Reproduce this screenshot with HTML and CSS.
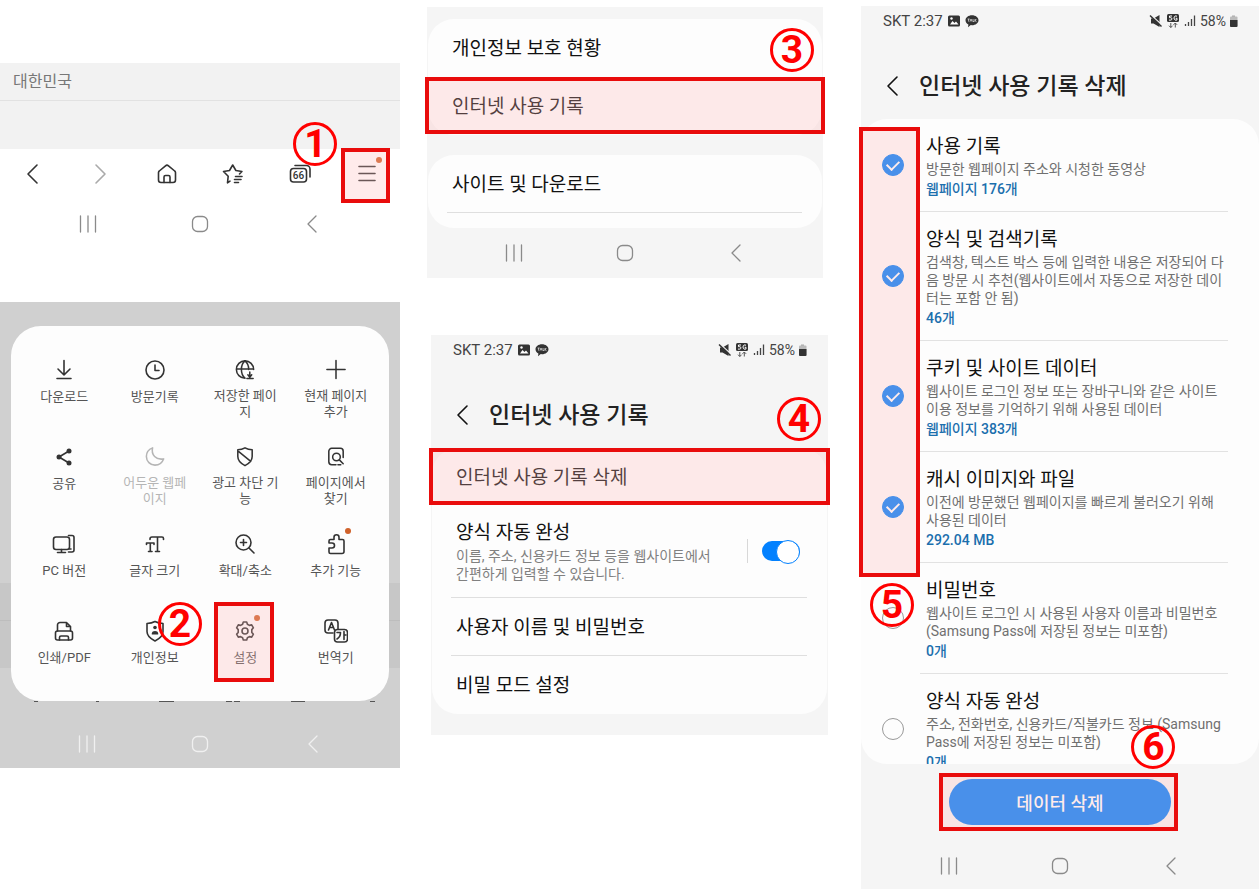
FILE: index.html
```html
<!DOCTYPE html>
<html lang="ko">
<head>
<meta charset="utf-8">
<title>인터넷 사용 기록 삭제 방법</title>
<link rel="stylesheet" href="styles.css">
</head>
<body>
<svg class="defs" aria-hidden="true">
  <symbol id="recents" viewBox="0 0 24 24"><path d="M4.500 4v16M12 4v16M19.500 4v16"/></symbol>
  <symbol id="homekey" viewBox="0 0 24 24"><rect x="4.500" y="4.500" width="15" height="15" rx="5"/></symbol>
  <symbol id="backkey" viewBox="0 0 24 24"><path d="M16 4 8 12l8 8"/></symbol>
  <symbol id="chevron" viewBox="0 0 24 24"><path d="M16 3 7 12l9 9"/></symbol>
  <symbol id="photo" viewBox="0 0 14 14"><rect x="1" y="1.500" width="12" height="11" rx="1.500" fill="#333"/><path d="M3 10.500 5.500 7l2 2 1.500-1.500 2.500 3z" fill="#fff"/><circle cx="4.500" cy="4.500" r="1.200" fill="#fff"/></symbol>
  <symbol id="talk" viewBox="0 0 14 14"><path d="M7 1.200c3.600 0 6.500 2.200 6.500 5s-2.900 5-6.500 5l-1.200-.1L3 13.300l.4-2.900C1.600 9.500.5 8 .5 6.200c0-2.800 2.900-5 6.500-5z" fill="#333"/><path d="M2.600 5h2M3.600 5v2.600M5 7.600 6 5l1 2.600M8 5v2.500h1.300M10 5v2.600M11.400 5 10 6.400l1.500 1.200" fill="none" stroke="#eee" stroke-width=".7"/></symbol>
  <symbol id="mute" viewBox="0 0 14 14"><path d="M2 4.500h2.500L10.500 1v12L4.500 9.500H2z" fill="#333"/><path d="M2.500 1.500 13 11" stroke="#f5f5f5" stroke-width="1.200"/><path d="m1 1.500 11.500 11" stroke="#333" stroke-width="1.500"/></symbol>
  <symbol id="fiveg" viewBox="0 0 14 14"><rect x="1" y="0" width="12" height="8" rx="1.500" fill="#333"/><path d="M6 2H3.500v1.700h1.300c1.500 0 1.500 2.400 0 2.400H3M11 2.300C9.500 1.300 8 2.300 8 4s1.500 2.900 3 1.900V4.300H9.700" fill="none" stroke="#fff"/><path d="M4.800 9v4.500M3 11.700l1.800 1.800 1.800-1.800M9.300 13.500V9M7.500 10.800 9.300 9l1.800 1.800" fill="none" stroke="#555"/></symbol>
  <symbol id="signal" viewBox="0 0 14 14"><path d="M2.500 10v2M5.500 8v4M8.500 5v7" stroke="#444" stroke-width="1.300"/><path d="M11.500 1.500V12" stroke="#444" stroke-width="1.300"/></symbol>
  <symbol id="battery" viewBox="0 0 9 14"><path d="M3 1.500h3V3H3z" fill="#aaa"/><rect x="1" y="2.500" width="7.500" height="10.500" rx="1" fill="#bbb"/><path d="M1 6h7.500v6a1 1 0 0 1-1 1H2a1 1 0 0 1-1-1z" fill="#333"/></symbol>
</svg>

<main class="page">
  <div class="column column-menu">
    <section class="browser" aria-label="브라우저 하단 메뉴">
      <p class="region">대한민국</p>
      <div class="blank"></div>
      <div class="toolbar">
        <button class="tool" aria-label="뒤로"><svg class="icon"><use href="#chevron"/></svg></button>
        <button class="tool tool-off" aria-label="앞으로"><svg class="icon" viewBox="0 0 24 24"><path d="m8 3 9 9-9 9"/></svg></button>
        <button class="tool" aria-label="홈"><svg class="icon" viewBox="0 0 24 24"><path d="M3.500 10.500a2 2 0 0 1 .8-1.500l6.200-5.200a2.300 2.300 0 0 1 3 0L19.700 9a2 2 0 0 1 .8 1.500V18a2.500 2.500 0 0 1-2.500 2.500H6A2.500 2.500 0 0 1 3.500 18z"/><path d="M9 20.500V15a1.500 1.500 0 0 1 1.500-1.500h3A1.500 1.500 0 0 1 15 15v5.500"/></svg></button>
        <button class="tool" aria-label="북마크"><svg class="icon" viewBox="0 0 24 24"><path d="M9 19.200 6.500 20.800l.7-6.600-4.700-4.700 6-1L11.700 3l3.200 5.500 6 1-2.400 2.500M14.500 14.500H21M13.500 17.500h6.500M13.500 20.500h4"/></svg></button>
        <button class="tool" aria-label="탭"><svg class="icon" viewBox="0 0 24 24"><rect x="2.500" y="6.500" width="16" height="13.500" rx="3"/><path d="M7 3.500h11.500A3.500 3.500 0 0 1 22 7v8"/><text x="10.500" y="17" text-anchor="middle" class="tab-count">66</text></svg></button>
        <button class="tool" aria-label="메뉴"><svg class="icon" viewBox="0 0 24 24"><path d="M4 4.500h16M4 11.500h16M4 18.500h16"/></svg><span class="dot"></span><span class="mark mark-menu"></span><span class="step step-1">1</span></button>
      </div>
      <nav class="keys keys-tall"><svg class="icon"><use href="#recents"/></svg><svg class="icon"><use href="#homekey"/></svg><svg class="icon"><use href="#backkey"/></svg></nav>
    </section>

    <section class="sheet" aria-label="메뉴">
      <div class="menu">
        <button class="item"><svg class="icon" viewBox="0 0 24 24"><path d="M12 2.500V17M6 11l6 6 6-6M5 20.500h14"/></svg><span>다운로드</span></button>
        <button class="item"><svg class="icon" viewBox="0 0 24 24"><circle cx="12" cy="12" r="9"/><path d="M12 7v5.500h4"/></svg><span>방문기록</span></button>
        <button class="item"><svg class="icon" viewBox="0 0 24 24"><path d="M12 21a9 9 0 1 1 9-9M12 21c-5-4-5-14 0-18M12 3c2.800 2.400 4 5.500 3.800 9M3.500 11.500H21M17 14.500v5.500M15 17.500l2 2.500 2-2.500M14 21.500h6.500"/></svg><span>저장한 페이지</span></button>
        <button class="item"><svg class="icon" viewBox="0 0 24 24"><path d="M12 2.500v19M2.500 12h19"/></svg><span>현재 페이지 추가</span></button>
        <button class="item"><svg class="icon" viewBox="0 0 24 24"><path d="M17 6 7 12l10 6"/><g class="solid"><circle cx="17" cy="6" r="2.500"/><circle cx="7" cy="12" r="2.500"/><circle cx="17" cy="18" r="2.500"/></g></svg><span>공유</span></button>
        <button class="item item-off"><svg class="icon" viewBox="0 0 24 24"><path d="M9.500 3c-1.800 7 3.500 13 11.500 11.500C19.500 18.500 16 21 12 21a9 9 0 0 1-9-9c0-4 2.500-7.500 6.500-9z"/></svg><span>어두운 웹페이지</span></button>
        <button class="item"><svg class="icon" viewBox="0 0 24 24"><path d="M12 3c2.500 1.500 5 2 7.500 2v7c0 4.500-3.500 7.500-7.500 9.500C8 19.500 4.500 16.500 4.500 12V5C7 5 9.500 4.500 12 3zM5.500 7 18 17"/></svg><span>광고 차단 기능</span></button>
        <button class="item"><svg class="icon" viewBox="0 0 24 24"><path d="M12 20.500H7.500a3 3 0 0 1-3-3v-11a3 3 0 0 1 3-3h9a3 3 0 0 1 3 3V13"/><circle cx="12.500" cy="12.500" r="4"/><path d="m15.500 15.500 4 4M14 20.500h3"/></svg><span>페이지에서 찾기</span></button>
        <button class="item"><svg class="icon" viewBox="0 0 24 24"><rect x="1.500" y="5" width="16" height="12.500" rx="2.500"/><path d="M16.500 3.500H20a2 2 0 0 1 2 2V18a2 2 0 0 1-2 2h-3.500M9.500 17.500v3M5.500 20.500h8M17.500 17h1.500"/></svg><span>PC 버전</span></button>
        <button class="item"><svg class="icon" viewBox="0 0 24 24"><path d="M7 7.500V7a2 2 0 0 1 2-2h10a1.500 1.500 0 0 1 1.500 1.500v1M14.500 5v14.500M12.500 19.500h4M3.500 12.500v-1.500H11v1.500M7.300 11v8.500M5.500 19.500h3.500"/></svg><span>글자 크기</span></button>
        <button class="item"><svg class="icon" viewBox="0 0 24 24"><circle cx="10.500" cy="10.500" r="7.500"/><path d="m16 16 5 5M10.500 7.500v6M7.500 10.500h6"/></svg><span>확대/축소</span></button>
        <button class="item"><svg class="icon" viewBox="0 0 24 24"><path d="M5 11V9a1.500 1.500 0 0 1 1.500-1.500H10V5.300a2.500 2.500 0 1 1 5 0v2.200h3.500A1.500 1.500 0 0 1 20 9v10.500a2 2 0 0 1-2 2H6.500A1.500 1.500 0 0 1 5 20v-4h3a2.500 2.500 0 1 0 0-5H5z"/></svg><span>추가 기능</span><span class="dot"></span></button>
        <button class="item"><svg class="icon" viewBox="0 0 24 24"><path d="M5.500 12V6A2.500 2.500 0 0 1 8 3.500h6.500l4 4V12M14.500 3.500v4h4"/><rect x="3.500" y="12" width="17" height="9" rx="2"/><path d="M7.500 21v-2.500c0-1 .5-1.500 1.500-1.500h6c1 0 1.500.5 1.500 1.500V21"/></svg><span>인쇄/PDF</span></button>
        <button class="item"><svg class="icon" viewBox="0 0 24 24"><path d="M12 2.500c2.500 1.300 5 1.800 8 2v8c0 4.500-4 7.500-8 9.500-4-2-8-5-8-9.500v-8c3-.2 5.500-.7 8-2z"/><g class="solid"><circle cx="12" cy="8.500" r="1.800"/><path d="M8.800 15.500v-1c0-3.300 6.400-3.300 6.400 0v1z"/></g></svg><span>개인정보</span></button>
        <button class="item"><svg class="icon" viewBox="0 0 24 24"><path d="M9.600 5.200 10.300 3h3.400l.7 2.200 2 1.200 2.300-.5 1.700 2.900-1.600 1.800v2.800l1.600 1.800-1.700 2.900-2.300-.5-2 1.200-.7 2.200h-3.400l-.7-2.200-2-1.200-2.300.5-1.700-2.900 1.600-1.800v-2.800L3.600 8.800l1.700-2.900 2.300.5z"/><circle cx="12" cy="12" r="3"/></svg><span>설정</span><span class="dot"></span><span class="mark mark-settings"></span><span class="step step-2">2</span></button>
        <button class="item"><svg class="icon" viewBox="0 0 24 24"><path d="M9 14H4a3 3 0 0 1-3-3V4a3 3 0 0 1 3-3h7a3 3 0 0 1 3 3v6"/><path d="m4.500 11 3-7.500 3 7.500M5.500 8.500h4"/><rect x="10.500" y="10.500" width="13" height="12.500" rx="3"/><path d="M13 13.500h3.500c0 3-1 5-3.500 6.500M20 12.500v8M20 16h2"/></svg><span>번역기</span></button>
      </div>
      <svg class="peek" viewBox="0 0 400 4" aria-hidden="true"><path d="M34 0h4M96 0h3M159 0h15M226 0h6M234 0h6M291 0h14M370 0h5"/></svg>
      <nav class="keys keys-light"><svg class="icon"><use href="#recents"/></svg><svg class="icon"><use href="#homekey"/></svg><svg class="icon"><use href="#backkey"/></svg></nav>
    </section>
  </div>

  <div class="column column-settings">
    <section class="panel panel-privacy" aria-label="개인정보">
      <ul class="card">
        <li class="row">개인정보 보호 현황</li>
        <li class="row">인터넷 사용 기록<span class="mark mark-row"></span><span class="step step-3">3</span></li>
      </ul>
      <ul class="card card-cut">
        <li class="row ruled">사이트 및 다운로드</li>
      </ul>
      <nav class="keys keys-tall"><svg class="icon"><use href="#recents"/></svg><svg class="icon"><use href="#homekey"/></svg><svg class="icon"><use href="#backkey"/></svg></nav>
    </section>

    <section class="panel panel-history" aria-label="인터넷 사용 기록">
      <div class="status"><span>SKT 2:37</span><svg class="glyph"><use href="#photo"/></svg><svg class="glyph"><use href="#talk"/></svg><span class="status-end"><svg class="glyph"><use href="#mute"/></svg><svg class="glyph"><use href="#fiveg"/></svg><svg class="glyph"><use href="#signal"/></svg><span>58%</span><svg class="cell"><use href="#battery"/></svg></span></div>
      <header class="title"><button class="back" aria-label="뒤로"><svg class="icon"><use href="#chevron"/></svg></button><h2>인터넷 사용 기록</h2></header>
      <ul class="card">
        <li class="row">인터넷 사용 기록 삭제<span class="mark mark-row"></span><span class="step step-4">4</span></li>
        <li class="row row-toggle ruled"><label for="autofill"><span class="name">양식 자동 완성</span><span class="note">이름, 주소, 신용카드 정보 등을 웹사이트에서<br>간편하게 입력할 수 있습니다.</span></label><span class="split"></span><input class="toggle" type="checkbox" id="autofill" checked></li>
        <li class="row ruled">사용자 이름 및 비밀번호</li>
        <li class="row">비밀 모드 설정</li>
      </ul>
    </section>
  </div>

  <div class="column column-delete">
    <section class="panel panel-delete" aria-label="인터넷 사용 기록 삭제">
      <div class="status"><span>SKT 2:37</span><svg class="glyph"><use href="#photo"/></svg><svg class="glyph"><use href="#talk"/></svg><span class="status-end"><svg class="glyph"><use href="#mute"/></svg><svg class="glyph"><use href="#fiveg"/></svg><svg class="glyph"><use href="#signal"/></svg><span>58%</span><svg class="cell"><use href="#battery"/></svg></span></div>
      <header class="title"><button class="back" aria-label="뒤로"><svg class="icon"><use href="#chevron"/></svg></button><h2>인터넷 사용 기록 삭제</h2></header>
      <div class="choices">
        <ul class="list">
          <li class="choice"><input type="checkbox" id="c1" checked><label for="c1"><span class="name">사용 기록</span><span class="note">방문한 웹페이지 주소와 시청한 동영상</span><span class="count">웹페이지 176개</span></label></li>
          <li class="choice"><input type="checkbox" id="c2" checked><label for="c2"><span class="name">양식 및 검색기록</span><span class="note">검색창, 텍스트 박스 등에 입력한 내용은 저장되어 다<br>음 방문 시 추천(웹사이트에서 자동으로 저장한 데이<br>터는 포함 안 됨)</span><span class="count">46개</span></label></li>
          <li class="choice"><input type="checkbox" id="c3" checked><label for="c3"><span class="name">쿠키 및 사이트 데이터</span><span class="note">웹사이트 로그인 정보 또는 장바구니와 같은 사이트<br>이용 정보를 기억하기 위해 사용된 데이터</span><span class="count">웹페이지 383개</span></label></li>
          <li class="choice"><input type="checkbox" id="c4" checked><label for="c4"><span class="name">캐시 이미지와 파일</span><span class="note">이전에 방문했던 웹페이지를 빠르게 불러오기 위해<br>사용된 데이터</span><span class="count">292.04 MB</span></label></li>
          <li class="choice"><input type="checkbox" id="c5"><label for="c5"><span class="name">비밀번호</span><span class="note">웹사이트 로그인 시 사용된 사용자 이름과 비밀번호<br>(Samsung Pass에 저장된 정보는 미포함)</span><span class="count">0개</span></label></li>
          <li class="choice"><input type="checkbox" id="c6"><label for="c6"><span class="name">양식 자동 완성</span><span class="note">주소, 전화번호, 신용카드/직불카드 정보 (Samsung<br>Pass에 저장된 정보는 미포함)</span><span class="count">0개</span></label></li>
        </ul>
        <span class="mark mark-checks"></span><span class="step step-5">5</span>
      </div>
      <div class="action"><button class="delete">데이터 삭제</button><span class="mark mark-delete"></span><span class="step step-6">6</span></div>
      <nav class="keys"><svg class="icon"><use href="#recents"/></svg><svg class="icon"><use href="#homekey"/></svg><svg class="icon"><use href="#backkey"/></svg></nav>
    </section>
  </div>
</main>
</body>
</html>
```
FILE: styles.css
```css
* { box-sizing: border-box; }

body {
  margin: 0;
  background: #fff;
  color: #111;
  font-family: Roboto, "Noto Sans CJK KR", sans-serif;
}

ul, p, h2 { margin: 0; padding: 0; list-style: none; }
button { padding: 0; border: 0; background: none; color: inherit; font: inherit; }
.defs { position: absolute; width: 0; height: 0; }

.icon {
  width: 24px;
  height: 24px;
  fill: none;
  stroke: currentColor;
  stroke-width: 1.6;
  stroke-linecap: round;
  stroke-linejoin: round;
}
.solid { fill: currentColor; stroke: none; }

.page {
  display: grid;
  grid-template-columns: 400fr 401fr 404fr;
  column-gap: 27px;
  height: 100vh;
}
.column { display: flex; flex-direction: column; min-width: 0; min-height: 0; }
.column-menu { padding-top: 63px; gap: 53px; }
.column-settings { padding-top: 7px; gap: 57px; }
.column-delete { padding: 6px 0 1px 6px; }

/* Annotations */
.mark {
  position: absolute;
  border: 4px solid #e90c0c;
  background: rgba(255, 183, 183, 0.28);
  pointer-events: none;
}
.step {
  position: absolute;
  z-index: 2;
  display: flex;
  align-items: center;
  justify-content: center;
  width: 44px;
  height: 44px;
  border: 3px solid #f00;
  border-radius: 50%;
  color: #f00;
  font: 700 39px/38px Roboto, sans-serif;
}
.mark-menu { inset: -1px 10px -4px 8px; }
.mark-settings { inset: -17px auto -1px 50%; width: 60px; margin-left: -31px; }
.mark-row { inset: 0 -3px 1px; }
.mark-checks { top: 8px; left: -2px; width: 61px; height: 450px; }
.mark-delete { inset: -6px -7px -6px -10px; }
.step-1 { top: -27px; left: -40px; }
.step-2 { top: -17px; left: -42px; }
.step-3 { top: -49px; right: 8px; }
.step-4 { top: -51px; right: 6px; }
.step-5 { top: 464px; left: 9px; }
.step-6 { top: -54px; right: -4px; }

/* System keys */
.keys {
  display: grid;
  grid-template-columns: repeat(3, 1fr);
  place-items: center;
  height: 46px;
  padding: 0 8%;
  color: #8a8a8a;
}
.keys .icon { stroke-width: 1.3; }
.keys-tall { height: 50px; }
.keys-light { height: 67px; margin: 0 -11px; padding-top: 19px; color: #f0f0f0; }

/* Browser */
.region {
  height: 38px;
  padding-left: 13px;
  border-bottom: 1px solid #e2e2e2;
  background: #f2f2f2;
  color: #777;
  font-size: 16px;
  line-height: 37px;
}
.blank { height: 48px; background: #f2f2f2; }
.toolbar { display: grid; grid-template-columns: repeat(6, 1fr); }
.tool { position: relative; display: grid; place-items: center; height: 50px; color: #333; }
.tool-off { color: #aaa; }
.tab-count { fill: currentColor; stroke: none; font: 500 10px Roboto, sans-serif; }
.dot {
  position: absolute;
  top: 8px;
  left: 50%;
  width: 6px;
  height: 6px;
  margin-left: 9px;
  border-radius: 50%;
  background: #d0622b;
}

/* Menu sheet */
.sheet {
  padding: 24px 11px 0;
  background: linear-gradient(#d0d0d0 281px, #c7c7c7 281px, #c7c7c7 318px, #bdbdbd 318px, #bdbdbd 319px, #c7c7c7 319px, #c7c7c7 366px, #d0d0d0 366px);
}
.menu {
  display: grid;
  grid-template-columns: repeat(4, 1fr);
  row-gap: 25px;
  padding: 32px 8px 20px;
  border-radius: 30px;
  background: #fdfdfd;
}
.item {
  position: relative;
  display: flex;
  flex-direction: column;
  align-items: center;
  gap: 7px;
  height: 62px;
  color: #333;
  font-size: 13px;
  line-height: 16px;
}
.item > span:first-of-type { max-width: 70px; color: #555; }
.item-off, .item-off > span:first-of-type { color: #b5b5b5; }
.item .dot { top: -4px; }
.peek { display: block; height: 4px; margin: 0 -11px -4px; fill: none; stroke: #555; stroke-width: 2; }

/* Settings panels */
.panel { background: #f5f5f5; }
.panel-privacy { margin-right: 5px; padding-top: 12px; }
.panel-history { margin-left: 4px; padding-bottom: 21px; }
.card { margin: 0 1px; border-radius: 26px; background: #fdfdfd; }
.card-cut { margin-top: 20px; padding-bottom: 15px; }
.row {
  position: relative;
  padding: 16px 24px 14px;
  font-size: 19px;
  line-height: 28px;
}
.ruled::after {
  content: "";
  position: absolute;
  right: 20px;
  bottom: 0;
  left: 19px;
  border-bottom: 1px solid #dfdfdf;
}
.name, .note, .count { display: block; }
.note { color: #808080; font-size: 14px; line-height: 18px; }
.row-toggle { display: flex; align-items: center; padding: 13px 27px 15px 24px; }
.row-toggle label { flex: 1; white-space: nowrap; }
.split { width: 1px; height: 24px; margin-right: 14px; background: #d8d8d8; }
.toggle {
  position: relative;
  width: 38px;
  height: 20px;
  margin: 0;
  border-radius: 10px;
  background: #0381fe;
  appearance: none;
}
.toggle::before {
  content: "";
  position: absolute;
  top: -1px;
  right: 0;
  width: 22px;
  height: 22px;
  border: 1px solid #0381fe;
  border-radius: 50%;
  background: #fff;
}

.status {
  display: flex;
  align-items: center;
  gap: 4px;
  height: 30px;
  padding: 0 21px 0 22px;
  color: #444;
  font-size: 15px;
}
.status-end { display: flex; align-items: center; gap: 3px; margin-left: auto; font-size: 14px; }
.glyph { width: 14px; height: 14px; }
.cell { width: 9px; height: 14px; }
.title { display: flex; align-items: center; gap: 14px; height: 83px; padding: 17px 20px 0; }
.title h2 { padding-top: 2px; color: #222; font-size: 23px; font-weight: 500; line-height: 32px; }
.back { height: 24px; }

/* Delete panel */
.panel-delete { display: flex; flex: 1; flex-direction: column; min-height: 0; }
.choices { position: relative; flex: 1; min-height: 0; }
.list { height: 100%; overflow: hidden; border-radius: 26px; background: #fdfdfd; }
.choice { display: grid; grid-template-columns: 64px 1fr; align-items: center; }
.choice::after { content: ""; grid-column: 1 / -1; height: 1px; margin: 0 31px 0 59px; background: #e2e2e2; }
.choice input {
  display: grid;
  place-items: center;
  width: 22px;
  height: 22px;
  margin: 0 auto;
  border: 1px solid #999;
  border-radius: 50%;
  appearance: none;
}
.choice input:checked { border-color: #0381fe; background: #0381fe; }
.choice input:checked::before {
  content: "";
  width: 10px;
  height: 6px;
  margin-bottom: 3px;
  border: solid #fff;
  border-width: 0 0 2px 2px;
  transform: rotate(-45deg);
}
.choice label { padding: 16px 0 11px 1px; white-space: nowrap; }
.choice .name { font-size: 19px; line-height: 24px; }
.choice .note { padding-top: 1px; color: #707070; }
.count { color: #1b6fad; font-size: 14px; font-weight: 500; line-height: 22px; }
.action { position: relative; width: 56%; margin: 15px auto 18px; }
.delete {
  display: block;
  width: 100%;
  height: 46px;
  border-radius: 23px;
  background: #0381fe;
  color: #fff;
  font-size: 18px;
  font-weight: 500;
}
```
